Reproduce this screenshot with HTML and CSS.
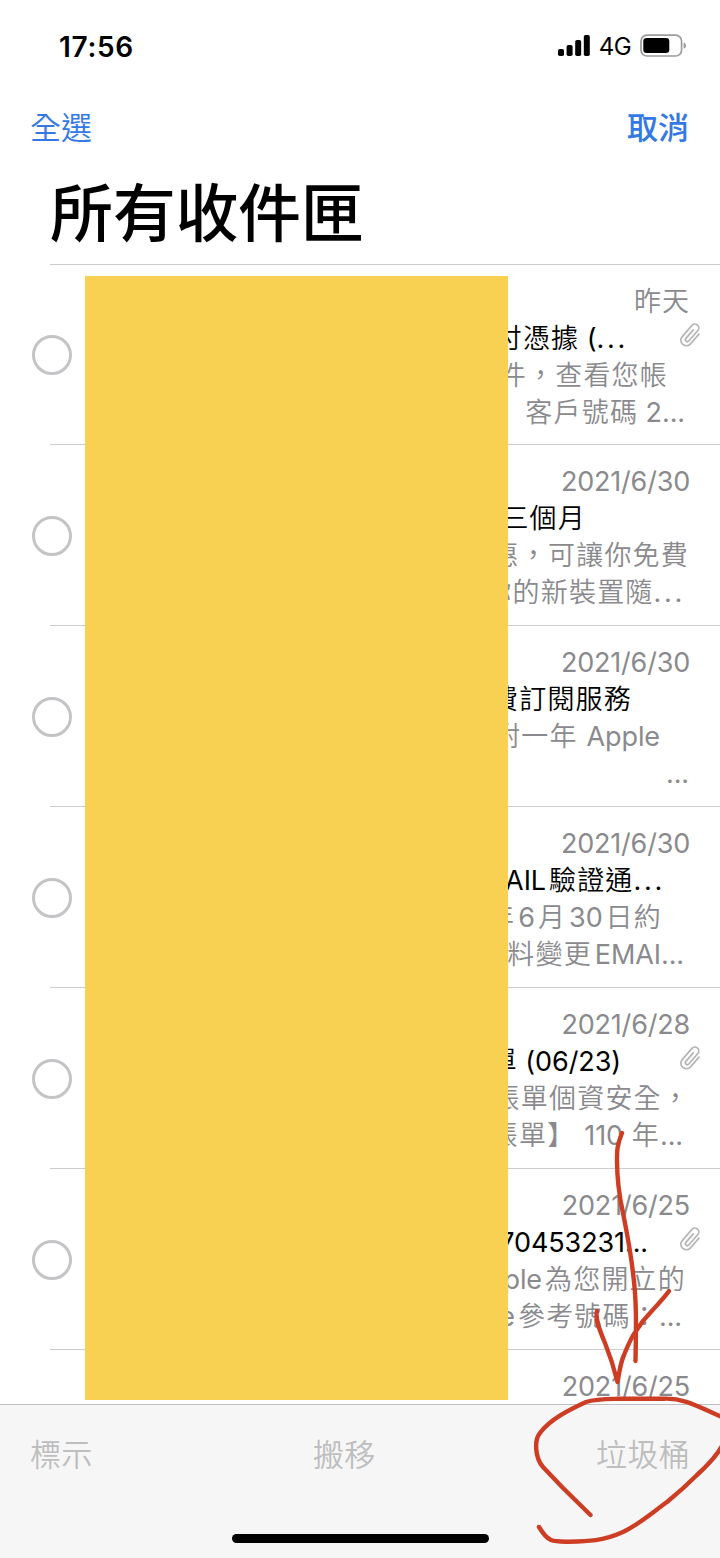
FILE: index.html
```html
<!DOCTYPE html>
<html lang="zh-Hant-TW">
<head>
<meta charset="utf-8">
<title>所有收件匣</title>
<link rel="stylesheet" href="styles.css">
</head>
<body>
<svg class="defs" width="0" height="0"><symbol id="clip" viewBox="0 0 22 26"><path transform="translate(10.8 12.8) rotate(41) scale(1.06)" d="M5.4-5.5V6.6A5.2 5.2 0 0 1-5 6.6V-7.4A3.7 3.7 0 0 1 2.4-7.4V5.6A1.8 1.8 0 0 1-1.3 5.6V-5" fill="none" stroke="currentColor" stroke-width="1.6" stroke-linecap="round" stroke-linejoin="round"/></symbol></svg>
<div class="phone">
  <header class="status">
    <span class="time">17:56</span>
    <span class="indicators">
      <svg class="signal" width="32" height="22" viewBox="0 0 32 22"><rect x="0" y="14" width="6" height="7" rx="1.8"/><rect x="8.6" y="10" width="6" height="11" rx="1.8"/><rect x="17.2" y="5" width="6" height="16" rx="1.8"/><rect x="25.8" y="0" width="6" height="21" rx="1.8"/></svg>
      <span class="network">4G</span>
      <svg class="battery" width="47" height="24" viewBox="0 0 47 24"><rect x="1" y="1.2" width="40.6" height="20.8" rx="6" fill="none" stroke="#9b9b9b" stroke-width="1.7"/><rect x="3.3" y="4" width="26" height="15" rx="3.3"/><path d="M43.6 8.4c3.2 1.2 3.2 5.2 0 6.4z" fill="#9b9b9b"/></svg>
    </span>
  </header>
  <nav class="nav"><span>全選</span><span class="strong">取消</span></nav>
  <h1 class="title">所有收件匣</h1>
  <main class="list">
    <article class="row"><i class="check"></i><div class="lines">
      <p class="date">昨天</p><p class="subject s1">付憑據<span class="en"> (</span><span class="dots">...</span></p><p class="p1a">件，查看您帳</p><p class="p1b">客戶號碼<span class="en"> 2...</span></p></div>
      <svg class="clip"><use href="#clip"/></svg></article>
    <article class="row"><i class="check"></i><div class="lines">
      <p class="date">2021/6/30</p><p class="subject s2">三個月</p><p class="p2a">惠，可讓你免費</p><p class="p2b">你的新裝置隨<span class="dots">...</span></p></div></article>
    <article class="row"><i class="check"></i><div class="lines">
      <p class="date">2021/6/30</p><p class="subject s3">費訂閱服務</p><p class="p3a">附一年 <span class="en">Apple</span></p><p class="p3b"><span class="en">...</span></p></div></article>
    <article class="row"><i class="check"></i><div class="lines">
      <p class="date">2021/6/30</p><p class="subject s4"><span class="en">EMAIL</span><b></b>驗證通<span class="dots">...</span></p><p class="p4a">年<b></b><span class="en">6</span><b></b>月<b></b><span class="en">30</span><b></b>日約</p><p class="p4b">料變更<b></b><span class="en">EMAI...</span></p></div></article>
    <article class="row"><i class="check"></i><div class="lines">
      <p class="date">2021/6/28</p><p class="subject s5">單<span class="en"> (06/23)</span></p><p class="p5a">帳單個資安全，</p><p class="p5b">帳單】 <span class="en">110</span> 年<span class="en">...</span></p></div>
      <svg class="clip"><use href="#clip"/></svg></article>
    <article class="row"><i class="check"></i><div class="lines">
      <p class="date">2021/6/25</p><p class="subject s6"><span class="en">70453231...</span></p><p class="p6a"><span class="en">Apple</span><b></b>為您開立的</p><p class="p6b"><span class="en">e</span><b></b>參考號碼：<span class="en">...</span></p></div>
      <svg class="clip"><use href="#clip"/></svg></article>
    <article class="row last"><div class="lines"><p class="date">2021/6/25</p></div></article>
    <div class="cover"></div>
  </main>
  <footer class="toolbar"><div class="actions"><span>標示</span><span>搬移</span><span>垃圾桶</span></div><div class="home"></div></footer>
  <svg class="ink" width="720" height="1558" viewBox="0 0 720 1558">
    <path d="M622 1133C617 1145 617 1151 617 1160C617 1175 619 1195 623 1213C628 1238 631 1255 633 1273C637 1303 636 1330 635.5 1361"/>
    <path d="M597 1311C595 1318 599 1329 605 1343C611 1358 614 1368 617.5 1382C620 1370 620 1364 624 1355C628 1345 632 1336 636 1331C641 1323 645 1318 650 1313C658 1304 664 1298 669 1291"/>
    <path d="M590.5 1515L563 1488L543 1467C535 1458 534 1440 540 1433C550 1419 571 1409 586 1402C595 1399 606 1399 617 1398.8L664 1398.7C683 1398 695 1405 722 1417M722 1446C716 1457 707 1466 697 1475C687 1485 678 1493 667 1502C653 1512 638 1525 623 1532C603 1541 588 1541.5 569 1541.7C552 1542 548 1542 539 1527"/>
  </svg>
</div>
</body>
</html>
```
FILE: styles.css
```css
* { box-sizing: border-box; }
body { margin: 0; background: #fff; font-family: Inter, "Noto Sans CJK TC", sans-serif; color: #000; }
.defs { position: absolute; }
.phone { position: relative; width: 720px; height: 1558px; overflow: hidden; display: flex; flex-direction: column; }
.status { height: 92px; padding: 0 33px 0 59px; display: flex; justify-content: space-between; align-items: center; }
.time { font-size: 28px; font-weight: 600; letter-spacing: .7px; padding-top: 1px; }
.indicators { display: flex; align-items: center; }
.network { font-size: 24px; font-weight: 400; margin: 1px 9px 0 9px; letter-spacing: -.6px; }
.nav { height: 72px; padding: 0 31px 0 30px; display: flex; justify-content: space-between; align-items: center; font-size: 31px; font-weight: 350; line-height: 40px; color: #3478e5; }
.nav .strong { font-weight: 500; }
.title { margin: 0; height: 100px; padding: 1px 0 0 50px; font-size: 63px; font-weight: 500; line-height: 96px; letter-spacing: -.3px; }
.list { position: relative; height: 1140px; overflow: hidden; }
.row { position: relative; height: 181px; padding: 18px 30px 0 32px; display: flex; align-items: flex-start; justify-content: space-between; }
.row:first-child { height: 180px; }
.row::before { content: ""; position: absolute; top: 0; left: 50px; right: 0; height: 1px; background: #ccccce; }
.check { width: 40px; height: 40px; margin-top: 53px; border: 3px solid #c4c4c7; border-radius: 50%; }
.row + .row .check { margin-top: 54px; }
.lines { width: 500px; color: #8a8a8e; font-size: 27px; font-weight: 350; letter-spacing: 1.2px; text-align: right; white-space: nowrap; }
.lines p { margin: 0; height: 37px; line-height: 39px; }
.lines .date { letter-spacing: -.2px; font-weight: 400; }
.row:first-child .date { letter-spacing: 1px; font-weight: 350; }
.lines .subject { color: #000; }
.lines b { display: inline-block; width: 3px; }
.en { letter-spacing: -.1px; font-weight: 400; }
.dots { letter-spacing: 2.7px; font-weight: 400; }
.last .lines { margin-left: auto; }
.clip { position: absolute; right: 18px; top: 58px; width: 22px; height: 26px; color: #b5b5b8; }
.s1 { padding-right: 62px; } .p1a { padding-right: 22px; } .p1b { padding-right: 5px; }
.s2 { padding-right: 104px; } .p2a { padding-right: 1px; } .p2b { padding-right: 5px; }
.s3 { padding-right: 58px; } .p3a { padding-right: 30px; } .p3b { padding-right: 1px; }
.s4 { padding-right: 25px; } .p4a { padding-right: 28px; } .p4b { padding-right: 6px; }
.s5 { padding-right: 69px; } .p5a { padding-right: 0; } .p5b { padding-right: 7px; }
.s6 { padding-right: 42px; } .p6a { padding-right: 4px; } .p6b { padding-right: 8px; }
.cover { position: absolute; left: 85px; top: 12px; width: 423px; height: 1124px; background: #f8d153; }
.toolbar { height: 154px; flex: none; background: #f6f6f7; border-top: 1px solid #c1c1c3; }
.actions { height: 94px; padding: 0 30px; display: flex; justify-content: space-between; align-items: center; font-size: 31px; font-weight: 350; letter-spacing: .3px; color: #bebebf; }
.home { width: 257px; height: 9px; margin: 35px auto 0; border-radius: 5px; background: #000; }
.ink { position: absolute; left: 0; top: 0; fill: none; stroke: #cc3d24; stroke-width: 4.4; stroke-linecap: round; stroke-linejoin: round; }
```
